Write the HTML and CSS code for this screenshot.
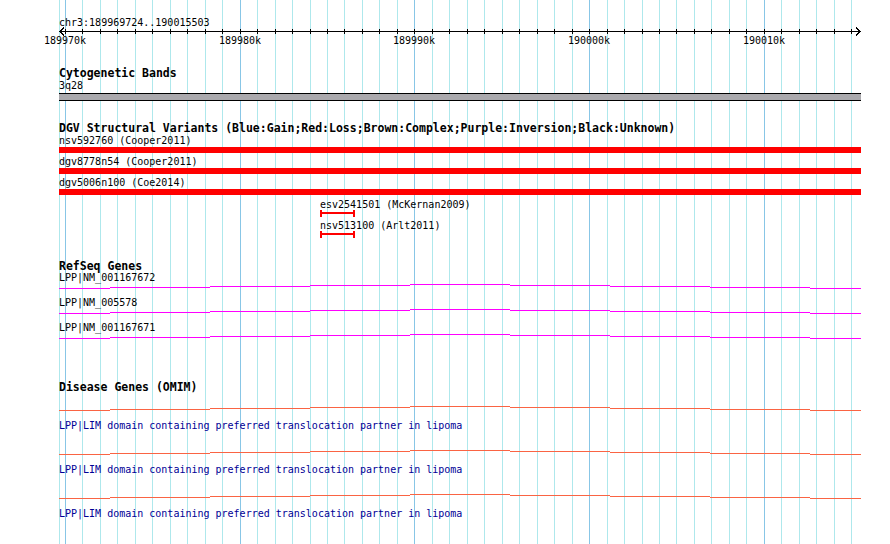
FILE: index.html
```html
<!DOCTYPE html>
<html lang="en">

<head>
    <meta charset="UTF-8">
    <title>chr3:189969724..190015503</title>
    <link rel="stylesheet" href="styles.css">
</head>

<body>
    <div class="browser">
        <!-- background grid, one line per kb -->
        <svg class="grid" width="890" height="544">
            <path class="grid-minor" d="M59.5 0V544M82.5 0V544M100.5 0V544M117.5 0V544M135.5 0V544M152.5 0V544M170.5 0V544M187.5 0V544M205.5 0V544M222.5 0V544M257.5 0V544M275.5 0V544M292.5 0V544M310.5 0V544M327.5 0V544M344.5 0V544M362.5 0V544M379.5 0V544M397.5 0V544M432.5 0V544M449.5 0V544M467.5 0V544M484.5 0V544M502.5 0V544M519.5 0V544M537.5 0V544M554.5 0V544M572.5 0V544M607.5 0V544M624.5 0V544M642.5 0V544M659.5 0V544M676.5 0V544M694.5 0V544M711.5 0V544M729.5 0V544M746.5 0V544M781.5 0V544M799.5 0V544M816.5 0V544M834.5 0V544M851.5 0V544" />
            <path class="grid-major" d="M65.5 0V544M240.5 0V544M414.5 0V544M589.5 0V544M764.5 0V544" />
        </svg>

        <div class="tracks">
            <div class="location">chr3:189969724..190015503</div>
            <svg class="ruler" width="802" height="18">
                <path class="ruler-line" d="M0 3.5H802M1 3.5L5 -0.5M1 3.5L5 7.5M801 3.5L797 -0.5M801 3.5L797 7.5" />
                <path class="ruler-line" d="M6.5 1V6M23.5 1V6M41.5 1V6M58.5 1V6M76.5 1V6M93.5 1V6M111.5 1V6M128.5 1V6M146.5 1V6M163.5 1V6M181.5 1V6M198.5 1V6M216.5 1V6M233.5 1V6M251.5 1V6M268.5 1V6M285.5 1V6M303.5 1V6M320.5 1V6M338.5 1V6M355.5 1V6M373.5 1V6M390.5 1V6M408.5 1V6M425.5 1V6M443.5 1V6M460.5 1V6M478.5 1V6M495.5 1V6M513.5 1V6M530.5 1V6M548.5 1V6M565.5 1V6M583.5 1V6M600.5 1V6M617.5 1V6M635.5 1V6M652.5 1V6M670.5 1V6M687.5 1V6M705.5 1V6M722.5 1V6M740.5 1V6M757.5 1V6M775.5 1V6M792.5 1V6" />
                <text x="6" y="16">189970k</text>
                <text x="181" y="16">189980k</text>
                <text x="355" y="16">189990k</text>
                <text x="530" y="16">190000k</text>
                <text x="705" y="16">190010k</text>
            </svg>

            <section class="track track-cyto">
                <h2 class="track-title">Cytogenetic Bands</h2>
                <div class="feature-label">3q28</div>
                <div class="band"></div>
            </section>

            <section class="track track-dgv">
                <h2 class="track-title">DGV Structural Variants (Blue:Gain;Red:Loss;Brown:Complex;Purple:Inversion;Black:Unknown)</h2>
                <div class="variant-list">
                    <div class="variant">
                        <div class="feature-label">nsv592760 (Cooper2011)</div>
                        <div class="variant-bar"></div>
                    </div>
                    <div class="variant">
                        <div class="feature-label">dgv8778n54 (Cooper2011)</div>
                        <div class="variant-bar"></div>
                    </div>
                    <div class="variant">
                        <div class="feature-label">dgv5006n100 (Coe2014)</div>
                        <div class="variant-bar"></div>
                    </div>
                    <div class="variant small-variant first-small">
                        <div class="feature-label">esv2541501 (McKernan2009)</div>
                        <div class="small-bar"></div>
                    </div>
                    <div class="variant small-variant">
                        <div class="feature-label">nsv513100 (Arlt2011)</div>
                        <div class="small-bar"></div>
                    </div>
                </div>
            </section>

            <section class="track track-refseq">
                <h2 class="track-title">RefSeq Genes</h2>
                <div class="gene">
                    <div class="feature-label">LPP|NM_001167672</div>
                    <svg class="gene-line" width="802" height="14"><path d="M0 5.5H51M51 4.5H151M151 3.5H251M251 2.5H351M351 1.5H451M451 2.5H551M551 3.5H651M651 4.5H751M751 5.5H802" /></svg>
                </div>
                <div class="gene">
                    <div class="feature-label">LPP|NM_005578</div>
                    <svg class="gene-line" width="802" height="14"><path d="M0 5.5H51M51 4.5H151M151 3.5H251M251 2.5H351M351 1.5H451M451 2.5H551M551 3.5H651M651 4.5H751M751 5.5H802" /></svg>
                </div>
                <div class="gene">
                    <div class="feature-label">LPP|NM_001167671</div>
                    <svg class="gene-line" width="802" height="14"><path d="M0 5.5H51M51 4.5H151M151 3.5H251M251 2.5H351M351 1.5H451M451 2.5H551M551 3.5H651M651 4.5H751M751 5.5H802" /></svg>
                </div>
            </section>

            <section class="track track-omim">
                <h2 class="track-title">Disease Genes (OMIM)</h2>
                <div class="disease">
                    <svg class="disease-line" width="802" height="16"><path d="M0 6.5H51M51 5.5H151M151 4.5H251M251 3.5H351M351 2.5H451M451 3.5H551M551 4.5H651M651 5.5H751M751 6.5H802" /></svg>
                    <div class="feature-label">LPP|LIM domain containing preferred translocation partner in lipoma</div>
                </div>
                <div class="disease">
                    <svg class="disease-line" width="802" height="16"><path d="M0 6.5H51M51 5.5H151M151 4.5H251M251 3.5H351M351 2.5H451M451 3.5H551M551 4.5H651M651 5.5H751M751 6.5H802" /></svg>
                    <div class="feature-label">LPP|LIM domain containing preferred translocation partner in lipoma</div>
                </div>
                <div class="disease">
                    <svg class="disease-line" width="802" height="16"><path d="M0 6.5H51M51 5.5H151M151 4.5H251M251 3.5H351M351 2.5H451M451 3.5H551M551 4.5H651M651 5.5H751M751 6.5H802" /></svg>
                    <div class="feature-label">LPP|LIM domain containing preferred translocation partner in lipoma</div>
                </div>
            </section>
        </div>
    </div>
</body>

</html>
```

FILE: styles.css
```css
body {
    margin: 0;
    background-color: #fff;
    font-family: "DejaVu Sans Mono", "Liberation Mono", monospace;
    color: #000;
}

.browser {
    position: relative;
    width: 890px;
    height: 544px;
    overflow: hidden;
}

.grid {
    position: absolute;
    top: 0;
    left: 0;
    shape-rendering: crispEdges;
}

.grid-minor {
    stroke: #aee8ec;
    stroke-width: 1;
}

.grid-major {
    stroke: #88c6e6;
    stroke-width: 1;
}

.tracks {
    position: relative;
    width: 802px;
    padding: 17px 0 0 59px;
}

.location {
    font-size: 10px;
    line-height: 11px;
    height: 11px;
}

.ruler {
    display: block;
    overflow: visible;
}

.ruler-line {
    stroke: #000;
    stroke-width: 1;
    fill: none;
    shape-rendering: crispEdges;
}

.ruler text {
    font-family: "DejaVu Sans Mono", monospace;
    font-size: 10px;
    text-anchor: middle;
    fill: #000;
}

.track-title {
    margin: 0;
    font-size: 11.5px;
    font-weight: bold;
    line-height: 12px;
    height: 12px;
    white-space: nowrap;
}

.feature-label {
    font-size: 10px;
    line-height: 11px;
    height: 11px;
    white-space: nowrap;
}

/* cytogenetic bands */
.track-cyto {
    margin-top: 21px;
}

.track-cyto .feature-label {
    margin-top: 1px;
}

.band {
    margin-top: 2px;
    height: 8px;
    box-sizing: border-box;
    border-top: 1px solid #000;
    border-bottom: 1px solid #000;
    background-color: #aaa9ad;
}

/* structural variants */
.track-dgv {
    margin-top: 21px;
}

.variant-list {
    display: flex;
    flex-direction: column;
    gap: 3px;
    padding-top: 1px;
}

.variant-bar {
    margin-top: 1px;
    height: 6px;
    background-color: #ff0000;
}

.small-variant {
    padding-left: 261px;
}

.first-small {
    margin-top: 1px;
}

.small-bar {
    width: 35px;
    height: 7px;
    box-sizing: border-box;
    border-left: 2px solid #ff0000;
    border-right: 2px solid #ff0000;
    background: linear-gradient(#ff0000, #ff0000) 0 2px / 100% 2px no-repeat;
}

/* refseq genes */
.track-refseq {
    margin-top: 22px;
}

.gene-line {
    display: block;
    shape-rendering: crispEdges;
}

.gene-line path {
    stroke: #ff00ff;
    stroke-width: 1;
    fill: none;
}

/* omim */
.track-omim {
    margin-top: 34px;
}

.disease-line {
    display: block;
    margin-top: 17px;
    shape-rendering: crispEdges;
}

.disease:first-of-type .disease-line {
    margin-top: 11px;
}

.disease-line path {
    stroke: #fa6443;
    stroke-width: 1;
    fill: none;
}

.disease .feature-label {
    color: #000096;
}
```
